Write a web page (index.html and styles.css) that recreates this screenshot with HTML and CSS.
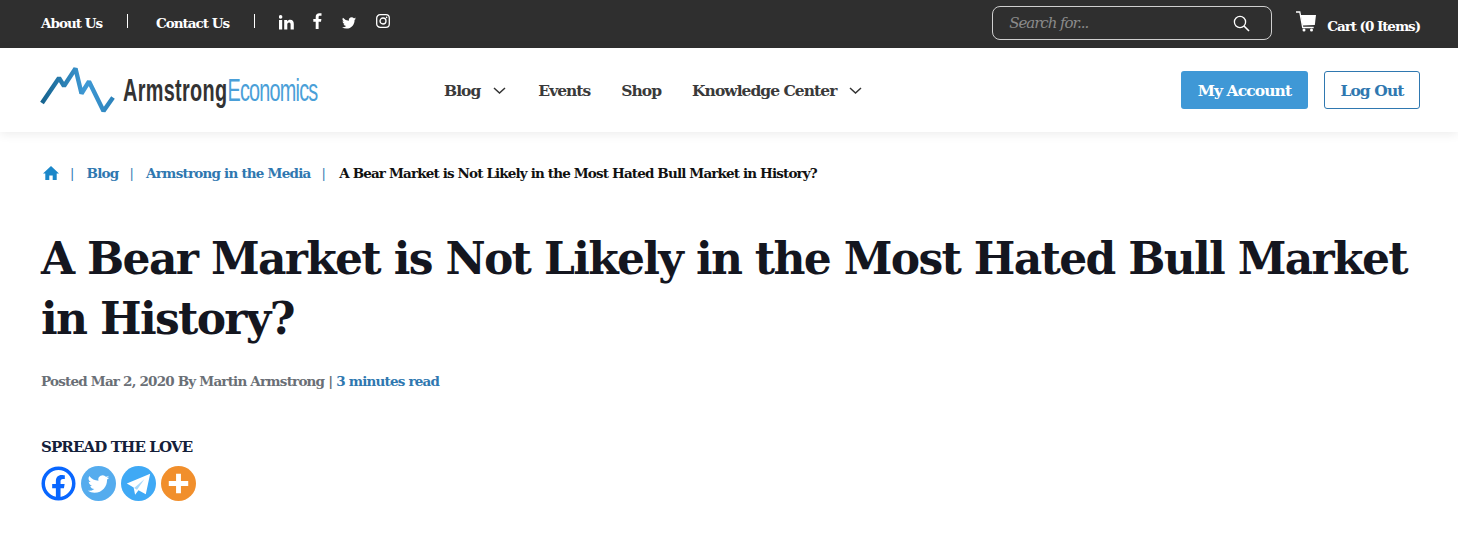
FILE: index.html
```html
<!DOCTYPE html>
<html lang="en">
<head>
<meta charset="utf-8">
<title>A Bear Market is Not Likely in the Most Hated Bull Market in History?</title>
<link rel="stylesheet" href="styles.css">
</head>
<body>
<header>
  <div class="topbar">
    <nav class="toplinks">
      <a href="#" class="toplink first">About Us</a>
      <a href="#" class="toplink second">Contact Us</a>
      <div class="socials">
        <svg class="s-in" width="15" height="15" viewBox="0 0 15 15"><rect x="0" y="5" width="3.2" height="9.5" fill="#fff"/><circle cx="1.6" cy="1.9" r="1.8" fill="#fff"/><path d="M5.2 5h3v1.4c.6-1 1.700-1.600 3-1.600 2.700 0 3.600 1.700 3.600 4.300v5.400h-3.200V9.700c0-1.200-.3-2.200-1.500-2.200-1.300 0-1.800 1-1.800 2.200v4.800H5.200z" fill="#fff"/></svg>
        <svg class="s-fb" width="9" height="16" viewBox="0 0 9 16"><path d="M2.700 16V8.800H.3V6h2.400V3.900C2.700 1.500 4.100.2 6.300.2c1 0 1.900.1 2.200.1v2.500H7c-1.200 0-1.400.6-1.400 1.400V6h2.800L8 8.800H5.600V16z" fill="#fff"/></svg>
        <svg class="s-tw" width="14" height="12" viewBox="0 0 24 20"><path d="M24 2.400c-.9.400-1.800.7-2.800.8 1-.6 1.800-1.600 2.200-2.700-1 .6-2 1-3.100 1.200A4.900 4.900 0 0 0 11.900 6.200 14 14 0 0 1 1.700.9a4.900 4.900 0 0 0 1.500 6.600c-.8 0-1.600-.2-2.200-.6v.1c0 2.400 1.700 4.400 3.900 4.800-.7.200-1.500.2-2.200.1.600 2 2.400 3.400 4.600 3.400A9.900 9.900 0 0 1 0 17.300 13.900 13.900 0 0 0 7.500 19.500c9.100 0 14-7.500 14-14v-.6c1-.7 1.800-1.600 2.500-2.500z" fill="#fff"/></svg>
        <svg class="s-ig" width="14" height="14" viewBox="0 0 14 14"><rect x=".7" y=".7" width="12.600" height="12.600" rx="3.400" fill="none" stroke="#fff" stroke-width="1.300"/><circle cx="7" cy="7" r="3" fill="none" stroke="#fff" stroke-width="1.300"/><circle cx="10.600" cy="3.400" r=".8" fill="#fff"/></svg>
      </div>
    </nav>
    <div class="topright">
      <div class="search">
        <span class="placeholder">Search for...</span>
        <svg width="17" height="17" viewBox="0 0 17 17"><circle cx="7" cy="7" r="5.600" fill="none" stroke="#fff" stroke-width="1.300"/><path d="M11 11l5 5" stroke="#fff" stroke-width="1.600"/></svg>
      </div>
      <a href="#" class="cart">
        <svg width="21" height="21" viewBox="0 0 21 21"><path d="M0 1h3.800l2.900 15.500h11" fill="none" stroke="#fff" stroke-width="1.300"/><path d="M4.700 4H20L18.800 14L6.500 14.500z" fill="#fff"/><circle cx="8" cy="19" r="1.500" fill="#fff"/><circle cx="15.500" cy="19" r="1.500" fill="#fff"/></svg>
        <span>Cart (0 Items)</span>
      </a>
    </div>
  </div>
  <div class="mainbar">
    <a href="#" class="logo">
      <svg width="76" height="48" viewBox="0 0 76 48"><defs><linearGradient id="lg" gradientUnits="userSpaceOnUse" x1="0" x2="76" y1="0" y2="0"><stop offset="0" stop-color="#14618c"/><stop offset=".6" stop-color="#3f9ad6"/><stop offset="1" stop-color="#2a80b8"/></linearGradient></defs><path d="M2 37L19 12L24 20L35.500 2.500L41.500 27.500L49 15.500L63.500 45L73 31.500" fill="none" stroke="url(#lg)" stroke-width="4.400" stroke-linejoin="bevel"/></svg>
      <span class="logotext"><span class="logo-a">Armstrong</span><span class="logo-b">Economics</span></span>
    </a>
    <nav class="menu">
      <a href="#" class="item">Blog<svg class="chev" width="13" height="7" viewBox="0 0 13 7"><path d="M1 1l5.500 5 5.500-5" fill="none" stroke="#333" stroke-width="1.500"/></svg></a>
      <a href="#" class="item">Events</a>
      <a href="#" class="item">Shop</a>
      <a href="#" class="item">Knowledge Center<svg class="chev" width="13" height="7" viewBox="0 0 13 7"><path d="M1 1l5.500 5 5.500-5" fill="none" stroke="#333" stroke-width="1.500"/></svg></a>
    </nav>
    <div class="actions">
      <a href="#" class="btn solid">My Account</a>
      <a href="#" class="btn outline">Log Out</a>
    </div>
  </div>
</header>
<main>
  <nav class="crumbs">
    <svg width="16" height="14" viewBox="0 0 16 14"><path d="M8 0L0 7.400h2.300V14h4v-4.500h3.400V14h4V7.400H16z" fill="#1b87c9"/></svg>
    <i class="bar">|</i>
    <a href="#">Blog</a>
    <i class="bar">|</i>
    <a href="#">Armstrong in the Media</a>
    <i class="bar b3">|</i>
    <span class="current">A Bear Market is Not Likely in the Most Hated Bull Market in History?</span>
  </nav>
  <h1>A Bear Market is Not Likely in the Most Hated Bull Market in History?</h1>
  <p class="meta">Posted Mar 2, 2020 By Martin Armstrong | <a href="#">3 minutes read</a></p>
  <h2 class="spread">SPREAD THE LOVE</h2>
  <div class="share">
    <svg width="35" height="35" viewBox="0 0 36 36"><circle cx="18" cy="18" r="15.700" fill="#fff" stroke="#0866ff" stroke-width="3.600"/><path d="M15.300 34V23h-3.800v-4.600h3.800v-3c0-4 2.300-6.200 5.900-6.200 1.700 0 3.300.3 3.300.3v3.900h-1.900c-1.900 0-2.500 1.200-2.500 2.400v2.600h4.200l-.7 4.600h-3.500v11z" fill="#0866ff"/></svg>
    <svg width="35" height="35" viewBox="0 0 36 36"><circle cx="18" cy="18" r="18" fill="#55acee"/><path transform="translate(7 9.500) scale(.92)" d="M24 2.400c-.9.400-1.800.7-2.800.8 1-.6 1.800-1.600 2.200-2.700-1 .6-2 1-3.100 1.200A4.900 4.900 0 0 0 11.900 6.200 14 14 0 0 1 1.700.9a4.900 4.900 0 0 0 1.500 6.600c-.8 0-1.600-.2-2.200-.6v.1c0 2.400 1.700 4.400 3.900 4.800-.7.200-1.500.2-2.200.1.600 2 2.400 3.400 4.600 3.400A9.900 9.900 0 0 1 0 17.300 13.900 13.900 0 0 0 7.500 19.500c9.100 0 14-7.500 14-14v-.6c1-.7 1.800-1.600 2.500-2.500z" fill="#fff"/></svg>
    <svg width="35" height="35" viewBox="0 0 36 36"><circle cx="18" cy="18" r="18" fill="#3fa9f5"/><path d="M6 18L30 8L25.500 29L18 25L14.500 29.500L13 22z" fill="#fff"/><path d="M13.500 22.500L24 13.500L16.500 24.500z" fill="#3fa9f5" opacity=".45"/></svg>
    <svg width="35" height="35" viewBox="0 0 36 36"><circle cx="18" cy="18" r="18" fill="#f18f2c"/><path d="M15.500 8h5v7.500H28v5h-7.500V28h-5v-7.500H8v-5h7.500z" fill="#fff"/></svg>
  </div>
</main>
</body>
</html>
```
FILE: styles.css
```css
* { box-sizing: border-box; }
html, body { margin: 0; padding: 0; }
body { font-family: "DejaVu Serif", "Liberation Serif", serif; background: #fff; color: #14161f; height: 536px; overflow: hidden; }
a { text-decoration: none; color: inherit; }

.topbar { height: 48px; background: #2f2f2f; display: flex; justify-content: space-between; padding: 0 38px 0 41px; }
.toplinks { display: flex; align-items: flex-start; padding-top: 14px; }
.toplink { color: #fff; font-size: 13.500px; font-weight: bold; line-height: 18px; letter-spacing: -1px; height: 14px; }
.first { width: 87px; border-right: 1px solid #fff; margin-right: 28px; }
.second { width: 99px; border-right: 1px solid #fff; }
.socials { display: flex; align-items: flex-start; margin-left: 24px; }
.s-in { margin-top: 1px; }
.s-fb { margin-left: 19px; margin-top: -1px; }
.s-tw { margin-left: 20px; margin-top: 3px; }
.s-ig { margin-left: 20px; }

.topright { display: flex; align-items: flex-start; }
.search { width: 280px; height: 34px; margin-top: 6px; border: 1px solid #cfcfcf; border-radius: 8px; display: flex; align-items: center; justify-content: space-between; padding: 0 21px 0 16px; }
.placeholder { font-size: 15px; font-style: italic; color: #8a8a8a; letter-spacing: -1.050px; }
.cart { display: flex; align-items: flex-start; margin-left: 24px; padding-top: 11px; color: #fff; font-size: 13.500px; font-weight: bold; letter-spacing: -1.050px; }
.cart span { margin-left: 10px; margin-top: 6px; line-height: 18px; }

.mainbar { height: 84px; display: flex; align-items: center; padding: 0 38px 0 40px; box-shadow: 0 2px 10px rgba(0,0,0,.08); position: relative; }
.logo { display: flex; align-items: center; width: 404px; }
.logotext { font-family: "Liberation Sans", sans-serif; font-size: 32px; display: inline-block; transform: scaleX(.62); transform-origin: left center; white-space: nowrap; margin-left: 7px; width: 200px; }
.logo-a { color: #333; font-weight: bold; letter-spacing: .54px; }
.logo-b { color: #4a9fd8; letter-spacing: -1.250px; }
.menu { display: flex; align-items: center; flex: 1; gap: 31px; }
.item { font-size: 15.500px; font-weight: bold; color: #3a3a3a; letter-spacing: -.97px; display: flex; align-items: center; }
.chev { margin: 0 1px 0 13px; }
.actions { display: flex; gap: 16px; }
.btn { height: 38px; border-radius: 3px; font-size: 15.500px; font-weight: bold; display: flex; align-items: center; justify-content: center; letter-spacing: -.9px; }
.solid { width: 127px; background: #3f98d6; color: #fff; }
.outline { width: 96px; border: 1px solid #2f78b0; color: #2f78b0; }

main { padding: 0 41px; }
.crumbs { display: flex; align-items: center; height: 18px; margin-top: 32px; font-size: 13.500px; font-weight: bold; letter-spacing: -.78px; color: #2f78b0; }
.crumbs svg { margin-left: 2px; }
.bar { font-style: normal; font-weight: normal; font-size: 13px; margin: 0 13px 0 11px; }
.b3 { margin-right: 14px; }
.current { color: #111; font-weight: bold; letter-spacing: -.85px; }

h1 { margin: 47px 0 0; font-size: 44px; line-height: 60px; font-weight: bold; letter-spacing: -1.680px; color: #14161f; }
.meta { margin: 22px 0 0; font-size: 13.500px; line-height: 20px; font-weight: bold; color: #6a6f76; letter-spacing: -.8px; }
.meta a { color: #2f78b0; }
.spread { margin: 46px 0 0; font-size: 15px; line-height: 20px; font-weight: bold; color: #14203a; letter-spacing: -.87px; }
.share { display: flex; gap: 5px; margin-top: 9px; }
```
